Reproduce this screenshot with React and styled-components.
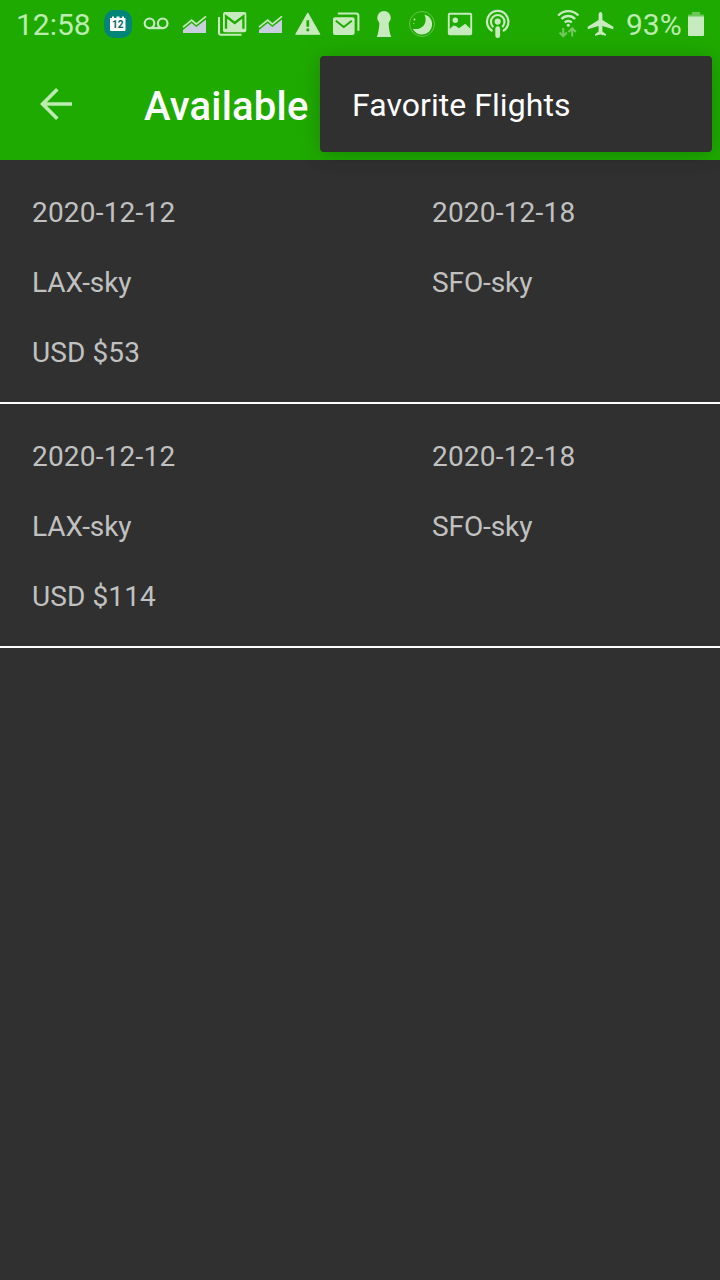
import React from 'react';
import styled, { createGlobalStyle } from 'styled-components';

const Global = createGlobalStyle`
  * { box-sizing: border-box; }
  body { margin: 0; background: #303030; font-family: Roboto, sans-serif; }
`;

const GREEN = '#1faa00';
const TINT = '#c7ebbf';

const Screen = styled.div`
  position: relative;
  width: 720px;
  min-height: 1280px;
  background: #303030;
  overflow: hidden;
`;

const StatusBar = styled.header`
  display: flex;
  align-items: center;
  height: 48px;
  padding: 0 16px;
  background: ${GREEN};
  color: #bcecb2;
`;

const Clock = styled.span`
  width: 83px;
  font-size: 30px;
  line-height: 48px;
  padding-top: 2px;
`;

const Notifications = styled.div`
  display: flex;
  flex: 1;
`;

const StatusIcon = styled.svg`
  display: block;
  flex: none;
  width: ${({ $w }) => $w || 38}px;
  height: 48px;
`;

const System = styled.div`
  display: flex;
  align-items: center;
`;

const Charge = styled.span`
  width: 63px;
  padding: 2px 0 0 1px;
  font-size: 30px;
  line-height: 48px;
  white-space: nowrap;
`;

const AppBar = styled.div`
  display: flex;
  align-items: center;
  height: 112px;
  padding-left: 32px;
  background: ${GREEN};
`;

const BackButton = styled.button`
  display: flex;
  width: 48px;
  height: 48px;
  padding: 0;
  border: 0;
  background: none;
`;

const Title = styled.h1`
  margin: 6px 0 0 64px;
  color: #fff;
  font-size: 40px;
  font-weight: 500;
  line-height: 48px;
  letter-spacing: 0.2px;
`;

const Menu = styled.div`
  position: absolute;
  top: 56px;
  right: 8px;
  width: 392px;
  height: 96px;
  border-radius: 4px;
  background: #303030;
  box-shadow: 0 4px 18px rgba(0, 0, 0, 0.1), 0 0 28px rgba(0, 0, 0, 0.1);
`;

const MenuItem = styled.div`
  padding: 1px 32px 0;
  color: #fff;
  font-size: 32px;
  line-height: 96px;
  letter-spacing: 0.05px;
`;

const Flight = styled.article`
  display: grid;
  grid-template-columns: 400px 1fr;
  grid-auto-rows: 70px;
  height: 244px;
  padding: 18px 0 0 32px;
  border-bottom: 2px solid #fff;
`;

const Cell = styled.span`
  grid-column: ${({ $full }) => ($full ? '1 / -1' : 'auto')};
  color: #c1c1c1;
  font-size: 28px;
  line-height: 70px;
  letter-spacing: ${({ $tracking }) => $tracking || 0}px;
`;

const flights = [
  { out: '2020-12-12', back: '2020-12-18', from: 'LAX-sky', to: 'SFO-sky', price: 'USD $53' },
  { out: '2020-12-12', back: '2020-12-18', from: 'LAX-sky', to: 'SFO-sky', price: 'USD $114' },
];

const CalendarIcon = () => (
  <StatusIcon viewBox="0 0 38 48">
    <rect x="5" y="10" width="28" height="28" rx="10.5" fill="#048578" />
    <path d="M11 18h2v-1.5h2V18h2.5v-1.5h3V18H23v-1.5h2V18h1.5v12a1 1 0 0 1-1 1H12a1 1 0 0 1-1-1z" fill="#fff" />
    <text x="18.8" y="28.2" textAnchor="middle" fontSize="10" fontWeight="700" fill="#05695f">12</text>
  </StatusIcon>
);

const VoicemailIcon = () => (
  <StatusIcon viewBox="0 0 38 48" fill="none" stroke={TINT} strokeWidth="2.2">
    <circle cx="12.5" cy="23.3" r="4.8" />
    <circle cx="25.7" cy="23.3" r="4.8" />
    <path d="M12.5 28.1h13.2" />
  </StatusIcon>
);

const ChartIcon = () => (
  <StatusIcon viewBox="0 0 38 48">
    <path d="M8 27.2 16.7 20.2 21.3 24.2 31 16.4" fill="none" stroke={TINT} strokeWidth="1.7" />
    <path d="M8 30 16.7 23 21.3 27 31 19.5V33H8z" fill="#c8cfdf" />
  </StatusIcon>
);

const MailStackIcon = () => (
  <StatusIcon viewBox="0 0 38 48">
    <path d="M6 17v16a1.7 1.7 0 0 0 1.7 1.7H28.5" fill="none" stroke={TINT} strokeWidth="2" />
    <rect x="10" y="12" width="23.3" height="20.3" rx="2" fill={TINT} />
    <path d="M13 28.8V16.3L21.7 23 30.4 16.3V28.8" fill="none" stroke={GREEN} strokeWidth="2.3" />
  </StatusIcon>
);

const WarningIcon = () => (
  <StatusIcon viewBox="0 0 38 48">
    <path d="M18.8 13.4 30.7 34.2H6.9z" fill={TINT} stroke={TINT} strokeWidth="1.2" strokeLinejoin="round" />
    <path d="M18.8 20.3v6.4M18.8 28.5v2.7" stroke={GREEN} strokeWidth="2.7" />
  </StatusIcon>
);

const EnvelopesIcon = () => (
  <StatusIcon viewBox="0 0 38 48">
    <path d="M10.8 13.6H29a2.4 2.4 0 0 1 2.4 2.4v14.8" fill="none" stroke={TINT} strokeWidth="2" />
    <rect x="6" y="17.3" width="21.6" height="17.7" rx="2" fill={TINT} />
    <path d="M8.8 20.8 16.8 27 24.8 20.8" fill="none" stroke={GREEN} strokeWidth="2" />
  </StatusIcon>
);

const PawnIcon = () => (
  <StatusIcon viewBox="0 0 38 48" fill={TINT}>
    <circle cx="19" cy="17.8" r="6.8" />
    <path d="M14.4 21h9.2c0 6 .8 11.5 2.6 16H11.8c1.800-4.500 2.600-10 2.600-16z" />
  </StatusIcon>
);

const MoonIcon = () => (
  <StatusIcon viewBox="0 0 38 48" fill={TINT}>
    <circle cx="19" cy="24" r="12.5" fill="none" stroke={TINT} strokeWidth="0.8" opacity="0.5" />
    <path d="M21.5 14.400A10.200 10.200 0 1 1 9.800 28.800C18.500 30.600 25.500 23.500 21.500 14.400z" />
    <circle cx="11.5" cy="19.5" r="0.9" />
    <circle cx="10.8" cy="23.5" r="0.6" />
  </StatusIcon>
);

const PictureIcon = () => (
  <StatusIcon viewBox="0 0 38 48">
    <rect x="7.8" y="13.8" width="22.4" height="20.4" rx="1" fill="none" stroke={TINT} strokeWidth="1.9" />
    <circle cx="14.3" cy="20.3" r="2.7" fill={TINT} />
    <path d="M8 29.5 12.6 25.5 15.2 26.2 18 28.2 24.2 23.8 30.5 29.7V34.5H8z" fill={TINT} />
  </StatusIcon>
);

const PodcastIcon = () => (
  <StatusIcon viewBox="0 0 38 48" fill="none" stroke={TINT} strokeWidth="2.2" strokeLinecap="round">
    <path d="M12.7 30.5A10.7 10.7 0 1 1 24.7 30.5" />
    <path d="M13.7 26.4A6.8 6.8 0 1 1 23.7 26.4" />
    <circle cx="18.7" cy="21.6" r="3.1" fill={TINT} stroke="none" />
    <path d="M18.7 28.7v7" strokeWidth="4.8" />
  </StatusIcon>
);

const WifiIcon = () => (
  <StatusIcon $w={30} viewBox="0 0 30 48" fill="none" stroke={TINT} strokeWidth="2.4">
    <path d="M4.2 15.5A13.8 13.8 0 0 1 24.4 15.5" />
    <path d="M7.500 19A9.200 9.200 0 0 1 21.100 19" />
    <path d="M10.8 22.500A4.900 4.900 0 0 1 17.800 22.500" />
    <circle cx="14.3" cy="25.200" r="1.5" fill={TINT} stroke="none" />
    <path d="M9.2 28v8M5.6 32.500l3.600 3.700 3.600-3.700M18.200 36.500v-8M14.600 32l3.600-3.700 3.600 3.700" opacity="0.5" strokeWidth="2" />
  </StatusIcon>
);

const PlaneIcon = () => (
  <StatusIcon $w={41} viewBox="0 0 41 48" fill={TINT}>
    <path d="M16.5 12c1.200 0 1.900 1.400 1.900 3v5l10.900 6.800v2.400L18.400 26v5.600l3.600 2.600v1.500l-5.500-1.200-5.500 1.200v-1.500l3.600-2.600V26L3.700 29.200v-2.400L14.600 20v-5c0-1.600.7-3 1.900-3z" />
  </StatusIcon>
);

const BatteryIcon = () => (
  <StatusIcon $w={16} viewBox="0 0 16 48" fill={TINT}>
    <path d="M4 12h8v2.500h3a1 1 0 0 1 1 1V17H0v-1.500a1 1 0 0 1 1-1h3z" opacity="0.45" />
    <path d="M0 16.500h16V35a1 1 0 0 1-1 1H1a1 1 0 0 1-1-1z" />
  </StatusIcon>
);

export default function App() {
  return (
    <Screen>
      <Global />
      <StatusBar>
        <Clock>12:58</Clock>
        <Notifications>
          <CalendarIcon />
          <VoicemailIcon />
          <ChartIcon />
          <MailStackIcon />
          <ChartIcon />
          <WarningIcon />
          <EnvelopesIcon />
          <PawnIcon />
          <MoonIcon />
          <PictureIcon />
          <PodcastIcon />
        </Notifications>
        <System>
          <WifiIcon />
          <PlaneIcon />
          <Charge>93%</Charge>
          <BatteryIcon />
        </System>
      </StatusBar>
      <AppBar>
        <BackButton aria-label="Back">
          <svg width="48" height="48" viewBox="0 0 48 48" fill="none" stroke="#bcecb2" strokeWidth="3.6">
            <path d="M40 24H11M25.300 9.300 10.600 24l14.700 14.700" />
          </svg>
        </BackButton>
        <Title>Available</Title>
      </AppBar>
      <main>
        {flights.map((f) => (
          <Flight key={f.price}>
            <Cell $tracking={0.2}>{f.out}</Cell>
            <Cell $tracking={0.2}>{f.back}</Cell>
            <Cell $tracking={-0.1}>{f.from}</Cell>
            <Cell $tracking={-0.1}>{f.to}</Cell>
            <Cell $full $tracking={0.1}>{f.price}</Cell>
          </Flight>
        ))}
      </main>
      <Menu role="menu">
        <MenuItem role="menuitem">Favorite Flights</MenuItem>
      </Menu>
    </Screen>
  );
}
